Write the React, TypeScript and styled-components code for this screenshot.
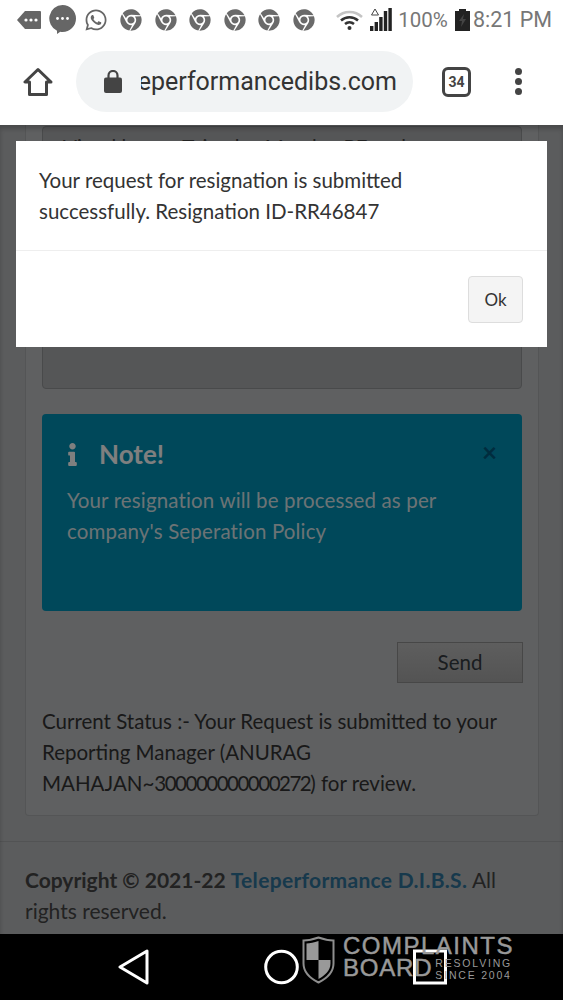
import { FaChrome, FaInfo, FaWhatsapp } from 'react-icons/fa';
import styled, { createGlobalStyle } from 'styled-components';

const chromeTabs = [0, 1, 2, 3, 4, 5];

export default function App() {
  return (
    <>
      <GlobalStyle />
      <Screen>
        <StatusBar>
          <NotifyIcons>
            <svg width='24' height='20' viewBox='0 0 24 20'>
              <path d='M8 1h15a1 1 0 0 1 1 1v16a1 1 0 0 1-1 1H8L0 10z' fill='#666' />
              <circle cx='9' cy='10' r='1.6' fill='#fff' />
              <circle cx='14' cy='10' r='1.6' fill='#fff' />
              <circle cx='19' cy='10' r='1.6' fill='#fff' />
            </svg>
            <svg width='27' height='29' viewBox='0 0 27 29'>
              <path d='M13.5 0a13.5 13.5 0 0 1 0 27c-.8 0-1.500-.1-2.200-.2L8 29v-3.300A13.500 13.500 0 0 1 13.500 0z' fill='#666' />
              <circle cx='8.500' cy='13.500' r='1.400' fill='#fff' />
              <circle cx='13.500' cy='13.500' r='1.400' fill='#fff' />
              <circle cx='18.500' cy='13.500' r='1.400' fill='#fff' />
            </svg>
            <FaWhatsapp color='#666' size={24} />
          </NotifyIcons>
          <ChromeIcons>
            {chromeTabs.map((tab) => (
              <FaChrome key={tab} color='#6a6a6a' size={22} />
            ))}
          </ChromeIcons>
          <SystemIcons>
            <svg width='27' height='20' viewBox='0 0 27 20'>
              <path d='M1 7a18 18 0 0 1 25 0' fill='none' stroke='#c4c4c4' strokeWidth='2.500' />
              <path d='M5 10.500a12.500 12.500 0 0 1 17 0' fill='none' stroke='#333' strokeWidth='2.500' />
              <path d='M9 14a7 7 0 0 1 9 0' fill='none' stroke='#333' strokeWidth='2.500' />
              <circle cx='13.500' cy='18' r='2' fill='#333' />
            </svg>
            <svg width='22' height='24' viewBox='0 0 22 24'>
              <path d='M5 1l3.500 6h-7z' fill='none' stroke='#444' strokeWidth='1' />
              <rect x='0' y='18' width='3.400' height='5' fill='#222' />
              <rect x='4.600' y='14' width='3.400' height='9' fill='#222' />
              <rect x='9.200' y='9' width='3.400' height='14' fill='#222' />
              <rect x='13.800' y='3' width='3.400' height='20' fill='#222' />
              <rect x='18.400' y='0' width='3.400' height='23' fill='#222' />
            </svg>
            <BatteryText>100%</BatteryText>
            <svg width='15' height='22' viewBox='0 0 15 22'>
              <path d='M4 0h7v2h4v20H0V2h4z' fill='#222' />
              <path d='M9 5l-5 7h3l-1 6 5-8H8z' fill='#444' />
            </svg>
            <ClockText>8:21 PM</ClockText>
          </SystemIcons>
        </StatusBar>

        <BrowserBar>
          <svg width='30' height='30' viewBox='0 0 30 30'>
            <path d='M15 2.500L2 15h4.500v12.500h17V15H28z' fill='none' stroke='#444' strokeWidth='3' strokeLinejoin='round' />
          </svg>
          <UrlPill>
            <svg width='18' height='23' viewBox='0 0 18 23'>
              <path d='M4.500 8V5.500a4.500 4.500 0 0 1 9 0V8' fill='none' stroke='#444' strokeWidth='2.200' />
              <rect x='0' y='7.500' width='18' height='15.500' rx='2' fill='#444' />
            </svg>
            <UrlClip>
              <span>teleperformancedibs.com</span>
            </UrlClip>
          </UrlPill>
          <TabCount>34</TabCount>
          <MenuDots>
            <i />
            <i />
            <i />
          </MenuDots>
        </BrowserBar>

        <Page>
          <Card>
            <ReasonBox>Vinod kumar Tejyadav Mandan PE and</ReasonBox>
            <NoteAlert>
              <NoteHead>
                <NoteMark>
                  <FaInfo size={23} />
                </NoteMark>
                <NoteTitle>Note!</NoteTitle>
                <NoteClose>×</NoteClose>
              </NoteHead>
              <NoteText>Your resignation will be processed as per company's Seperation Policy</NoteText>
            </NoteAlert>
            <SendRow>
              <SendButton>Send</SendButton>
            </SendRow>
            <StatusText>
              Current Status :- Your Request is submitted to your Reporting Manager (ANURAG MAHAJAN~<Digits>300000000000272</Digits>) for review.
            </StatusText>
          </Card>
          <Footer>
            <b>Copyright © 2021-22 </b>
            <FooterLink>Teleperformance D.I.B.S.</FooterLink> All rights reserved.
          </Footer>
          <Backdrop />
          <Modal>
            <ModalBody>Your request for resignation is submitted successfully. Resignation ID-RR46847</ModalBody>
            <ModalFooter>
              <OkButton>Ok</OkButton>
            </ModalFooter>
          </Modal>
        </Page>

        <NavBar>
          <svg width='31' height='36' viewBox='0 0 31 36'>
            <path d='M29 2v32L2 18z' fill='none' stroke='#fff' strokeWidth='3' strokeLinejoin='round' />
          </svg>
          <svg width='35' height='36' viewBox='0 0 35 36'>
            <circle cx='17.500' cy='18' r='15.800' fill='none' stroke='#fff' strokeWidth='3' />
          </svg>
          <svg width='35' height='36' viewBox='0 0 35 36'>
            <rect x='2.500' y='2' width='31' height='32' fill='none' stroke='#fff' strokeWidth='3' />
          </svg>
          <Watermark>
            <svg width='33' height='48' viewBox='0 0 33 48'>
              <path d='M16.500 1.500C11 3.500 6 4.500 1.500 4.500v23c0 9 7 15 15 19 8-4 15-10 15-19v-23c-4.500 0-9.500-1-15-3z' fill='none' stroke='#8e8e8e' strokeWidth='2' />
              <path d='M16.500 5C12 6.500 8 7.300 4.500 7.500V24h12zM16.500 24v19c6-3.300 12-8 12-15.500V24z' fill='#999' />
            </svg>
            <WatermarkWords>
              <BrandTop>COMPLAINTS</BrandTop>
              <BrandRow>
                <BrandBottom>BOARD</BrandBottom>
                <BrandTagline>
                  <span>RESOLVING</span>
                  <span>SINCE 2004</span>
                </BrandTagline>
              </BrandRow>
            </WatermarkWords>
          </Watermark>
        </NavBar>
      </Screen>
    </>
  );
}

const GlobalStyle = createGlobalStyle`
  html, body {
    margin: 0;
    padding: 0;
    background: #fff;
  }
  * {
    box-sizing: border-box;
  }
`;

const pageFont = `Lato, 'Noto Sans', sans-serif`;

const Screen = styled.div`
  width: 563px;
  height: 1000px;
  display: flex;
  flex-direction: column;
  overflow: hidden;
  font-family: ${pageFont};
`;

const StatusBar = styled.div`
  height: 38px;
  flex: none;
  display: flex;
  align-items: center;
  padding: 1px 11px 0 17px;
  background: #fff;
`;
const NotifyIcons = styled.div`
  display: flex;
  align-items: center;
  gap: 8px;
`;
const ChromeIcons = styled.div`
  display: flex;
  gap: 12.500px;
  margin-left: 12px;
`;
const SystemIcons = styled.div`
  display: flex;
  align-items: center;
  margin-left: auto;
  gap: 7px;
`;
const BatteryText = styled.span`
  margin-left: -1px;
  font: 20.500px Roboto, sans-serif;
  color: #777;
`;
const ClockText = styled.span`
  margin-left: -4px;
  font: 21.500px Roboto, sans-serif;
  color: #777;
`;

const BrowserBar = styled.div`
  height: 87px;
  flex: none;
  display: flex;
  align-items: center;
  padding: 0 0 0 23px;
  background: #fff;
`;
const UrlPill = styled.div`
  width: 337px;
  height: 61px;
  margin-left: 23px;
  padding: 0 16px 0 28px;
  display: flex;
  align-items: center;
  gap: 19px;
  border-radius: 31px;
  background: #f1f3f4;
`;
const UrlClip = styled.div`
  flex: 1;
  display: flex;
  justify-content: flex-end;
  overflow: hidden;
  white-space: nowrap;
  font: 25px Roboto, sans-serif;
  color: #333;
`;
const TabCount = styled.div`
  width: 29px;
  height: 30px;
  margin-left: 29px;
  display: flex;
  align-items: center;
  justify-content: center;
  border: 3px solid #444;
  border-radius: 6px;
  font: bold 14px Roboto, sans-serif;
  color: #444;
`;
const MenuDots = styled.div`
  display: flex;
  flex-direction: column;
  gap: 3px;
  margin-left: 44px;
  i {
    width: 7px;
    height: 7px;
    border-radius: 50%;
    background: #444;
  }
`;

const Page = styled.div`
  position: relative;
  flex: 1;
  min-height: 0;
  overflow: hidden;
  background: #b6b8ba;
  color: #444;
  font-size: 20.500px;
  line-height: 31px;
`;
const Card = styled.div`
  margin: 0 24px 0 25px;
  padding: 1px 16px 16px;
  background: #bec0c2;
  border: 1px solid #a8aaac;
  border-top: 0;
  border-radius: 0 0 4px 4px;
`;
const ReasonBox = styled.div`
  height: 263px;
  padding: 5px 20px;
  background: #aaacae;
  border: 1px solid #929496;
  border-radius: 4px;
  white-space: nowrap;
  overflow: hidden;
`;
const NoteAlert = styled.div`
  height: 197px;
  margin-top: 25px;
  padding: 20px 25px;
  border-radius: 4px;
  background: #0090b4;
  color: #fff;
`;
const NoteHead = styled.div`
  display: flex;
  align-items: center;
  height: 40px;
`;
const NoteMark = styled.span`
  display: flex;
  width: 32px;
  margin-left: -6px;
  margin-right: 6px;
`;
const NoteTitle = styled.span`
  font-size: 26px;
  font-weight: 700;
`;
const NoteClose = styled.span`
  margin-left: auto;
  margin-top: -4px;
  font-size: 26px;
  font-weight: 700;
  color: #00587c;
`;
const NoteText = styled.div`
  margin-top: 11px;
  letter-spacing: 0.150px;
  color: #d9e6ea;
`;
const SendRow = styled.div`
  display: flex;
  justify-content: flex-end;
  margin: 31px -1px 0 0;
`;
const SendButton = styled.div`
  width: 126px;
  height: 41px;
  display: flex;
  align-items: center;
  justify-content: center;
  background: linear-gradient(#bcbcbc, #a8a8a8);
  border: 1px solid #8e8e8e;
  color: #343a40;
`;
const StatusText = styled.div`
  margin-top: 23px;
  color: #333;
`;
const Digits = styled.span`
  letter-spacing: -1.500px;
`;
const Footer = styled.div`
  margin-top: 25px;
  padding: 22px 25px 0;
  border-top: 1px solid #a4a6a8;
  font-size: 21px;
`;
const FooterLink = styled.b`
  color: #2f7299;
  letter-spacing: 0.300px;
`;
const Backdrop = styled.div`
  position: absolute;
  inset: 0;
  background: rgba(0, 0, 0, 0.5);
  box-shadow: inset 0 4px 4px rgba(0, 0, 0, 0.2);
`;
const Modal = styled.div`
  position: absolute;
  top: 16px;
  left: 16px;
  width: 531px;
  height: 206px;
  background: #fff;
  color: #333;
`;
const ModalBody = styled.div`
  height: 110px;
  padding: 24px 100px 0 23px;
  border-bottom: 1px solid #eee;
`;
const ModalFooter = styled.div`
  display: flex;
  justify-content: flex-end;
  padding: 25px 24px;
`;
const OkButton = styled.div`
  width: 55px;
  height: 47px;
  display: flex;
  align-items: center;
  justify-content: center;
  background: #f4f4f4;
  border: 1px solid #ddd;
  border-radius: 4px;
  font-size: 17px;
`;

const NavBar = styled.div`
  position: relative;
  height: 66px;
  flex: none;
  display: grid;
  grid-template-columns: repeat(3, 148px);
  justify-content: center;
  justify-items: center;
  align-items: center;
  background: #000;
`;
const Watermark = styled.div`
  position: absolute;
  top: 2px;
  left: 302px;
  display: flex;
  gap: 8px;
`;
const WatermarkWords = styled.div`
  display: flex;
  flex-direction: column;
  margin-top: -1px;
  color: #999;
  font-family: 'Liberation Sans', sans-serif;
  -webkit-text-stroke: 0.500px #999;
`;
const BrandTop = styled.div`
  font-size: 24px;
  line-height: 22px;
  letter-spacing: 1.500px;
`;
const BrandRow = styled.div`
  display: flex;
  gap: 3px;
`;
const BrandBottom = styled.div`
  font-size: 24px;
  line-height: 22px;
  letter-spacing: 0.800px;
`;
const BrandTagline = styled.div`
  display: flex;
  flex-direction: column;
  padding-top: 1px;
  font-size: 10.500px;
  line-height: 11.500px;
  letter-spacing: 1.800px;
  -webkit-text-stroke: 0;
`;
